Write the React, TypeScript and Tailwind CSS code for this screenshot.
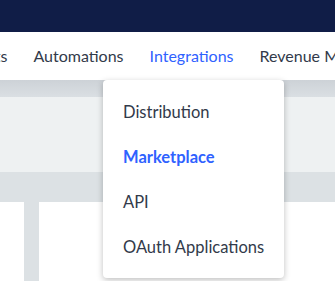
import { useState } from 'react';

const NAV_ITEMS = ['Contacts', 'Automations', 'Integrations', 'Revenue Management'];
const MENU_ITEMS = ['Distribution', 'Marketplace', 'API', 'OAuth Applications'];

export default function App() {
  const [active] = useState('Integrations');
  const [selected] = useState('Marketplace');

  return (
    <div
      className="relative w-[335px] h-[281px] overflow-hidden bg-white"
      style={{ fontFamily: 'Lato, "Open Sans", sans-serif' }}
    >
      {/* top app bar */}
      <div className="h-[32px] bg-[#101d47]" />

      {/* main nav */}
      <nav className="h-[48px] bg-white flex items-center gap-[26px] ml-[-55px] whitespace-nowrap">
        {NAV_ITEMS.map((item) => (
          <span
            key={item}
            className={`text-[16px] ${item === active ? 'text-[#2f62ff]' : 'text-[#323a4a]'}`}
          >
            {item}
          </span>
        ))}
      </nav>

      {/* page body */}
      <div className="h-[17px] bg-gradient-to-b from-[#cdd2d7] to-[#dadfe3]" />
      <div className="h-[75px] bg-[#eef1f2]" />
      <div className="h-[30px] bg-[#dce1e4]" />
      <div className="flex h-[80px]">
        <div className="w-[24px]" />
        <div className="w-[15px] bg-[#dce1e4]" />
      </div>

      {/* integrations dropdown */}
      <div className="absolute left-[103px] top-[80px] w-[181px] h-[198px] bg-white rounded-[4px] shadow-[0_2px_6px_rgba(0,0,0,0.25)] flex flex-col justify-center gap-[25px] pl-[20px]">
        {MENU_ITEMS.map((item) => (
          <div
            key={item}
            className={`text-[16.5px] leading-[20px] ${
              item === selected ? 'text-[#2f62ff] font-bold' : 'text-[#323a4a]'
            }`}
          >
            {item}
          </div>
        ))}
      </div>
    </div>
  );
}
